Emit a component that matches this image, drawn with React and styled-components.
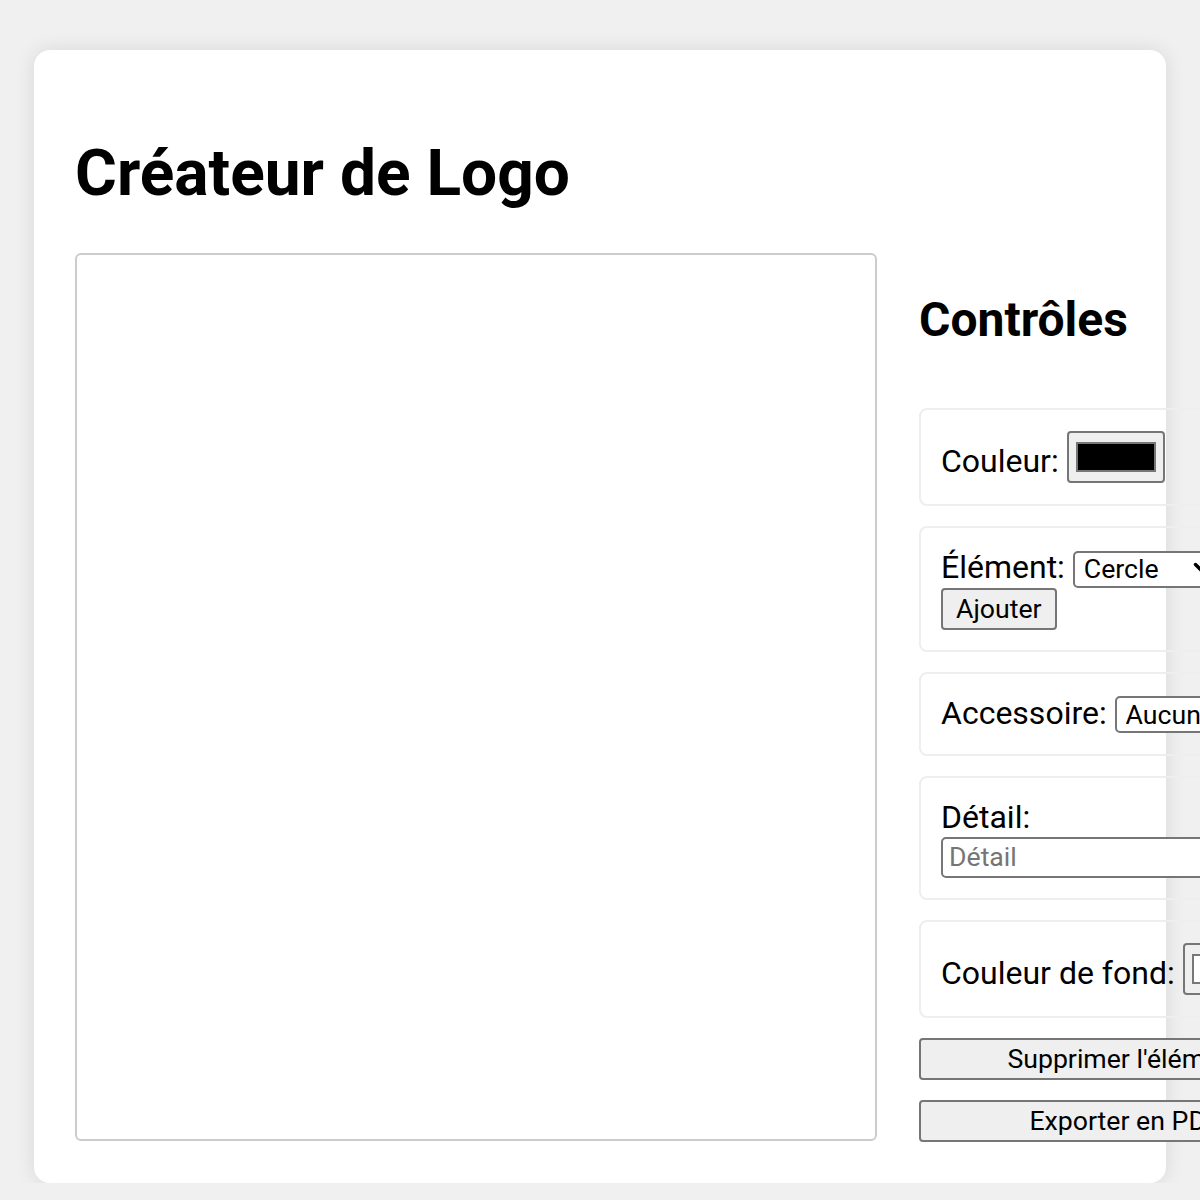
import React from "react";
import styled, { createGlobalStyle } from "styled-components";

const GlobalStyle = createGlobalStyle`
  html, body {
    overflow: hidden;
  }
  body {
    margin: 0;
    background: #f0f0f0;
    font-family: Roboto, "Liberation Sans", sans-serif;
    font-size: 32px;
    color: #000;
  }
`;

const Page = styled.div`
  padding: 50px 34px 0;
`;

const Card = styled.div`
  box-sizing: border-box;
  width: 1132px;
  background: #fff;
  border-radius: 16px;
  box-shadow: 0 0 20px rgba(0, 0, 0, 0.1);
  padding: 43px 41px 41px;
`;

const Title = styled.h1`
  font-size: 64px;
  font-weight: 700;
  margin: 43px 0 42px;
`;

const Workspace = styled.div`
  display: flex;
  align-items: flex-start;
  gap: 42px;
`;

const Canvas = styled.div`
  box-sizing: border-box;
  flex-shrink: 0;
  width: 802px;
  height: 888px;
  background: #fff;
  border: 2px solid #ccc;
  border-radius: 6px;
`;

const Panel = styled.div`
  flex-shrink: 0;
  width: 412px;
  display: flex;
  flex-direction: column;
  gap: 20px;
`;

const PanelTitle = styled.h2`
  font-size: 48px;
  font-weight: 700;
  margin: 38px 0 40px;
`;

const Group = styled.div`
  border: 2px solid #eee;
  border-radius: 8px;
  padding: ${(p) => p.$pad || "20px"};
`;

const Label = styled.label``;

const ColorInput = styled.input.attrs({ type: "color" })`
  box-sizing: border-box;
  width: 98px;
  height: 52px;
  padding: 0;
  border: 2px solid #767676;
  border-radius: 4px;
  background: #efefef;
  &::-webkit-color-swatch-wrapper {
    padding: 9px 7px;
  }
  &::-webkit-color-swatch {
    border: 2px solid #777;
    border-radius: 0;
  }
`;

const SelectWrap = styled.span`
  position: relative;
  display: inline-block;
`;

const Select = styled.select`
  box-sizing: border-box;
  appearance: none;
  width: ${(p) => p.$width}px;
  height: 37px;
  font-family: inherit;
  font-size: 26.67px;
  color: #000;
  background: #fff;
  border: 2px solid #767676;
  border-radius: 5px;
  padding: 0 40px 0 9px;
`;

const Chevron = styled.svg`
  position: absolute;
  right: 10px;
  top: 50%;
  transform: translateY(-50%);
  pointer-events: none;
`;

const TextInput = styled.input.attrs({ type: "text" })`
  box-sizing: border-box;
  width: 360px;
  height: 41px;
  font-family: inherit;
  font-size: 26.67px;
  border: 2px solid #767676;
  border-radius: 5px;
  padding: 2px 6px;
  &::placeholder {
    color: #757575;
  }
`;

const Button = styled.button`
  font-family: inherit;
  font-size: 26.67px;
  color: #000;
  background: #efefef;
  border: 2px solid #767676;
  border-radius: 4px;
  padding: ${(p) => (p.$wide ? "3px 12px" : "3px 13px")};
  width: ${(p) => (p.$wide ? "100%" : "auto")};
`;

const Dropdown = ({ width, value, options }) => (
  <SelectWrap>
    <Select $width={width} defaultValue={value}>
      {options.map((o) => (
        <option key={o.value} value={o.value}>
          {o.label}
        </option>
      ))}
    </Select>
    <Chevron width="18" height="12" viewBox="0 0 18 12">
      <path
        d="M2.5 2.5 L9 9 L15.5 2.5"
        fill="none"
        stroke="#000"
        strokeWidth="3.4"
        strokeLinecap="round"
        strokeLinejoin="round"
      />
    </Chevron>
  </SelectWrap>
);

const shapes = [
  { value: "cercle", label: "Cercle" },
  { value: "carre", label: "Carré" },
  { value: "triangle", label: "Triangle" },
  { value: "etoile", label: "Étoile" },
];

const accessories = [
  { value: "aucun", label: "Aucun" },
  { value: "chapeau", label: "Chapeau" },
  { value: "lunettes", label: "Lunettes" },
];

export default function App() {
  return (
    <Page>
      <GlobalStyle />
      <Card>
        <Title>Créateur de Logo</Title>
        <Workspace>
          <Canvas />
          <Panel>
            <PanelTitle>Contrôles</PanelTitle>
            <Group $pad="21px 20px">
              <Label>Couleur:</Label>{" "}
              <ColorInput defaultValue="#000000" />
            </Group>
            <Group>
              <Label>Élément:</Label>{" "}
              <Dropdown width={148} value="cercle" options={shapes} />{" "}
              <Button>Ajouter</Button>
            </Group>
            <Group $pad="20px 20px 21px">
              <Label>Accessoire:</Label>{" "}
              <Dropdown width={150} value="aucun" options={accessories} />
            </Group>
            <Group>
              <Label>Détail:</Label>{" "}
              <TextInput placeholder="Détail" />
            </Group>
            <Group $pad="21px 20px">
              <Label>Couleur de fond:</Label>{" "}
              <ColorInput defaultValue="#ffffff" />
            </Group>
            <Button $wide>Supprimer l'élément</Button>
            <Button $wide>Exporter en PDF</Button>
          </Panel>
        </Workspace>
      </Card>
    </Page>
  );
}
